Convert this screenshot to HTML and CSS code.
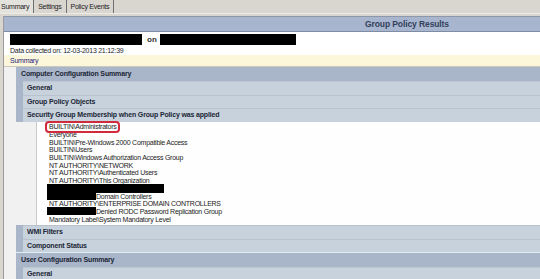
FILE: index.html
```html
<!DOCTYPE html>
<html>
<head lang="en">
    <meta charset="UTF-8">
    <title>Group Policy Results</title>
    <link rel="stylesheet" href="styles.css">
</head>
<body>
<!-- 顶部标签 -->
<div class="tabs">
    <span class="tab current">Summary</span>
    <span class="tab">Settings</span>
    <span class="tab">Policy Events</span>
</div>

<div class="panel">
    <div class="title">Group Policy Results</div>

    <div class="info">
        <div class="host">
            <span class="redact host-name"></span>
            <b>on</b>
            <span class="redact host-dc"></span>
        </div>
        <div class="date">Data collected on: 12-03-2013 21:12:39</div>
    </div>

    <div class="summary">Summary</div>

    <!-- 计算机配置 -->
    <div class="section">
        <div class="section-head">Computer Configuration Summary</div>
        <div class="row">General</div>
        <div class="row">Group Policy Objects</div>
        <div class="row">Security Group Membership when Group Policy was applied</div>
    </div>

    <div class="groups">
        <ul>
            <li><span class="marked">BUILTIN\Administrators</span></li>
            <li>Everyone</li>
            <li>BUILTIN\Pre-Windows 2000 Compatible Access</li>
            <li>BUILTIN\Users</li>
            <li>BUILTIN\Windows Authorization Access Group</li>
            <li>NT AUTHORITY\NETWORK</li>
            <li>NT AUTHORITY\Authenticated Users</li>
            <li>NT AUTHORITY\This Organization</li>
            <li><span class="redact long"></span></li>
            <li><span class="redact short"></span>Domain Controllers</li>
            <li>NT AUTHORITY\ENTERPRISE DOMAIN CONTROLLERS</li>
            <li><span class="redact short"></span>Denied RODC Password Replication Group</li>
            <li>Mandatory Label\System Mandatory Level</li>
        </ul>
    </div>

    <div class="section">
        <div class="row">WMI Filters</div>
        <div class="row">Component Status</div>
    </div>

    <!-- 用户配置 -->
    <div class="section user">
        <div class="section-head">User Configuration Summary</div>
        <div class="row">General</div>
    </div>
</div>
</body>
</html>
```

FILE: styles.css
```css
* {
    padding: 0;
    margin: 0;
}

ul {
    list-style: none;
}

html {
    overflow: hidden;
}

body {
    height: 279px;
    overflow: hidden;
    background-color: #d9d6d0;
    font-family: "Liberation Sans", Arial, sans-serif;
    font-size: 7px;
    letter-spacing: -0.25px;
    color: #1e1e1e;
}

.tabs {
    display: flex;
    height: 13px;
    border-bottom: 1px solid #ecebe7;
}

.tab {
    padding: 0 4px;
    line-height: 13px;
    border-right: 1px solid #6f6f6f;
    color: #1a1a1a;
}

.tab.current {
    padding-left: 1px;
    background-color: #e4e2dd;
}

.panel {
    margin: 2px 0 0 3px;
    border-left: 1px solid #9c9c9c;
    border-top: 1px solid #8e97a8;
    background-color: #f1f1f1;
}

/* 标题栏比窗口宽，这里只露出左半部分 */
.title {
    height: 14px;
    line-height: 14px;
    padding-left: 270px;
    border-bottom: 1px solid #7f8ca4;
    background-color: #a8b5cf;
    text-align: center;
    font-size: 8.5px;
    font-weight: bold;
    letter-spacing: -0.1px;
    color: #33405a;
}

.info {
    height: 23px;
    padding-left: 6px;
    background-color: #fff;
}

.host {
    display: flex;
    align-items: center;
    height: 11px;
    padding-top: 2px;
}

.host b {
    margin: 0 3px 0 5px;
    font-size: 8px;
    letter-spacing: 0;
    color: #333;
}

.redact {
    display: inline-block;
    background-color: #000;
}

.host-name {
    width: 132px;
    height: 11px;
}

.host-dc {
    width: 136px;
    height: 11px;
}

.date {
    line-height: 9px;
    margin-top: 1px;
}

.summary {
    height: 11px;
    line-height: 11px;
    padding-left: 6px;
    border-bottom: 1px solid #c9c9bd;
    background-color: #fcf6da;
    color: #1f1f7a;
}

.section {
    margin-left: 12px;
    padding-left: 7px;
    background-color: #a9b5c8;
}

.section-head {
    height: 14px;
    line-height: 14px;
    margin-left: -7px;
    padding-left: 5px;
    background-color: #a9b5c8;
    font-weight: bold;
    letter-spacing: -0.15px;
    color: #1b2636;
}

.row {
    height: 12.5px;
    line-height: 12.5px;
    padding-left: 4px;
    border-top: 1px solid #b7c2ce;
    background-color: #c8d2dc;
    font-weight: bold;
    letter-spacing: -0.15px;
    color: #1b2636;
}

.section-head + .row {
    border-top-color: #bdc7d3;
}

.section.user {
    border-top: 1px solid #e2eaf2;
}

.groups {
    margin-left: 32px;
    padding: 1.5px 0 2.4px 12px;
    border-left: 1px solid #c9c9c9;
    background-color: #fefefe;
}

.groups li {
    display: flex;
    align-items: center;
    height: 7.7px;
    white-space: nowrap;
    color: #1c1c1c;
}

.marked {
    position: relative;
}

/* 红色圈出的条目 */
.marked::after {
    content: '';
    position: absolute;
    left: -4px;
    right: -3px;
    top: -2px;
    bottom: -3px;
    border: 2px solid #d12a3c;
    border-radius: 4px;
}

.groups .long {
    width: 117px;
    height: 9px;
    margin-left: -2px;
}

.groups .short {
    width: 49px;
    height: 8px;
    margin-left: -2px;
}
```
